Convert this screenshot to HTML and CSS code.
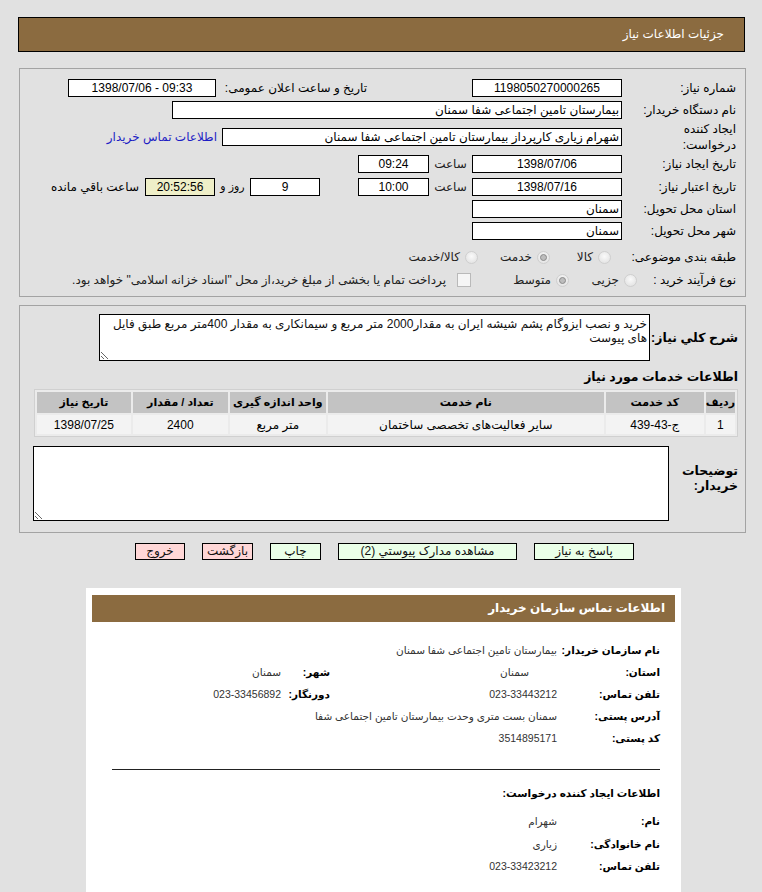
FILE: index.html
```html
<!DOCTYPE html>
<html lang="fa" dir="rtl">
<head>
    <meta charset="UTF-8">
    <title>جزئیات اطلاعات نیاز</title>
    <link rel="stylesheet" href="styles.css">
</head>
<body>
<div class="wrap">
    <div class="page-title">جزئیات اطلاعات نیاز</div>

    <!-- مشخصات نیاز -->
    <div class="panel info">
        <div class="row r1">
            <div class="lbl">شماره نیاز:</div>
            <div class="box w150 c">1198050270000265</div>
            <div class="pub">تاریخ و ساعت اعلان عمومی:</div>
            <div class="box w149 c ltr">1398/07/06 - 09:33</div>
        </div>
        <div class="row">
            <div class="lbl">نام دستگاه خریدار:</div>
            <div class="box w450">بیمارستان تامین اجتماعی شفا سمنان</div>
        </div>
        <div class="row r3">
            <div class="lbl">ایجاد کننده<br>درخواست:</div>
            <div class="box w400">شهرام زیاری کارپرداز بیمارستان تامین اجتماعی شفا سمنان</div>
            <a class="contact-link" href="#buyer">اطلاعات تماس خریدار</a>
        </div>
        <div class="row r4">
            <div class="lbl">تاریخ ایجاد نیاز:</div>
            <div class="box w150 c">1398/07/06</div>
            <div class="saat">ساعت</div>
            <div class="box w71 c">09:24</div>
        </div>
        <div class="row r5">
            <div class="lbl">تاریخ اعتبار نیاز:</div>
            <div class="box w150 c">1398/07/16</div>
            <div class="saat">ساعت</div>
            <div class="box w71 c">10:00</div>
            <div class="box w70 c days">9</div>
            <div class="ruz">روز و</div>
            <div class="box w70 c remain">20:52:56</div>
            <div class="remain-lbl">ساعت باقي مانده</div>
        </div>
        <div class="row">
            <div class="lbl">استان محل تحویل:</div>
            <div class="box w150">سمنان</div>
        </div>
        <div class="row">
            <div class="lbl">شهر محل تحویل:</div>
            <div class="box w150">سمنان</div>
        </div>
        <div class="row r8">
            <div class="lbl">طبقه بندی موضوعی:</div>
            <div class="opts cat">
                <span class="opt o1"><i class="radio"></i>کالا</span>
                <span class="opt o2"><i class="radio on"></i>خدمت</span>
                <span class="opt"><i class="radio"></i>کالا/خدمت</span>
            </div>
        </div>
        <div class="row r9">
            <div class="lbl">نوع فرآیند خرید :</div>
            <div class="opts proc">
                <span class="opt o3"><i class="radio"></i>جزیی</span>
                <span class="opt o4"><i class="radio on"></i>متوسط</span>
                <span class="opt"><i class="check"></i>پرداخت تمام یا بخشی از مبلغ خرید،از محل "اسناد خزانه اسلامی" خواهد بود.</span>
            </div>
        </div>
    </div>

    <!-- شرح و اقلام -->
    <div class="panel items">
        <div class="desc-row">
            <div class="blbl">شرح کلي نياز:</div>
            <textarea class="area desc" readonly>خرید و نصب ایزوگام پشم شیشه ایران به مقدار2000 متر مربع و سیمانکاری به مقدار 400متر مربع طبق فایل های پیوست</textarea>
        </div>

        <div class="sec-title">اطلاعات خدمات مورد نياز</div>
        <table class="grid">
            <tr>
                <th class="c-idx">ردیف</th>
                <th class="c-code">کد خدمت</th>
                <th class="c-name">نام خدمت</th>
                <th class="c-unit">واحد اندازه گیری</th>
                <th class="c-qty">تعداد / مقدار</th>
                <th>تاریخ نیاز</th>
            </tr>
            <tr>
                <td>1</td>
                <td>ج-43-439</td>
                <td>سایر فعالیت‌های تخصصی ساختمان</td>
                <td>متر مربع</td>
                <td>2400</td>
                <td>1398/07/25</td>
            </tr>
        </table>

        <div class="note-row">
            <div class="blbl">توضیحات<br>خریدار:</div>
            <textarea class="area note" readonly></textarea>
        </div>
    </div>

    <div class="actions">
        <span class="btn green b-reply">پاسخ به نیاز</span>
        <span class="btn green b-docs">مشاهده مدارک پیوستي (2)</span>
        <span class="btn green b-print">چاپ</span>
        <span class="btn red b-back">بازگشت</span>
        <span class="btn red b-exit">خروج</span>
    </div>

    <!-- اطلاعات تماس -->
    <div class="card" id="buyer">
        <div class="card-head">اطلاعات تماس سازمان خریدار</div>
        <div class="contact">
            <div class="k">نام سازمان خریدار:</div><div class="v span3">بیمارستان تامین اجتماعی شفا سمنان</div>
            <div class="k">استان:</div><div class="v pad">سمنان</div><div class="k">شهر:</div><div class="v">سمنان</div>
            <div class="k">تلفن تماس:</div><div class="v">023-33443212</div><div class="k">دورنگار:</div><div class="v">023-33456892</div>
            <div class="k">آدرس پستی:</div><div class="v span3">سمنان بست متری وحدت بیمارستان تامین اجتماعی شفا</div>
            <div class="k">کد پستی:</div><div class="v span3">3514895171</div>
        </div>
        <div class="sep"></div>
        <div class="sub-title">اطلاعات ایجاد کننده درخواست:</div>
        <div class="contact creator">
            <div class="k">نام:</div><div class="v span3">شهرام</div>
            <div class="k">نام خانوادگی:</div><div class="v span3">زیاری</div>
            <div class="k">تلفن تماس:</div><div class="v span3">023-33423212</div>
        </div>
    </div>
</div>
</body>
</html>
```

FILE: styles.css
```css
:root { --bg: #e1e1e1; --brown: #8b6b40; --line: #a3a3a3; --font: "Liberation Sans", "DejaVu Sans", sans-serif; }
body { margin: 0; background: var(--bg); color: #000; font-family: var(--font); font-size: 12px; direction: rtl; }

.wrap { padding: 17px 17px 0 18px; }

.page-title { height: 33px; line-height: 33px; background: var(--brown); border: 1px solid #000; color: #fff; padding-right: 20px; }

.panel { border: 1px solid var(--line); margin-right: -1px; margin-left: 1px; }
.info { margin-top: 16px; padding: 8px 9px 0 0; box-sizing: border-box; height: 229px; }
.items { margin-top: 8px; padding: 8px 7px 0 0; box-sizing: border-box; height: 228px; }

/* ردیف های فرم */
.row { display: flex; align-items: center; height: 22px; white-space: nowrap; }
.row.r3 { height: 32px; }
.row.r5 { height: 23px; }
.row.r8 { height: 30px; }
.row.r9 { height: 16px; }
.lbl { width: 110px; margin-left: 4px; line-height: 16px; }
.box { height: 16px; line-height: 16px; border: 1px solid #000; background: #fff; padding: 0 2px; overflow: hidden; white-space: nowrap; }
.box.c { text-align: center; }
.box.ltr { direction: ltr; }
.w150 { width: 144px; }
.w149 { width: 142px; }
.w450 { width: 444px; }
.w400 { width: 394px; }
.w71 { width: 65px; }
.w70 { width: 64px; }
.pub { width: 145px; margin-right: 105px; margin-left: 6px; }
.contact-link { color: #1d1dc4; text-decoration: none; margin-right: 5px; }
.saat { width: 43px; text-align: center; color: #222; }
.days { margin-right: 38px; }
.ruz { width: 35px; text-align: center; font-size: 11px; }
.remain { background: #efefc8; }
.remain-lbl { margin-right: 6px; }

/* گزینه های رادیویی */
.opts { display: flex; align-items: center; }
.opt { display: flex; align-items: center; gap: 5px; color: #222; }
.cat { margin-right: 11px; }
.proc { margin-right: -15px; }
.o1 { width: 61px; }
.o2 { width: 72px; }
.o3 { width: 68px; }
.o4 { width: 98px; }
.radio { width: 11px; height: 11px; border-radius: 50%; border: 1px solid #cfcfcf; background: radial-gradient(circle at 50% 40%, #fafafa, #dedede); position: relative; flex: none; }
.radio.on::after { content: ""; position: absolute; left: 2px; top: 2px; width: 5px; height: 5px; border-radius: 50%; border: 1px solid #8a8a8a; background: #bdbdbd; }
.check { width: 12px; height: 12px; border: 1px solid #b9b9b9; background: #f5f5f5; flex: none; margin-left: 6px; }

/* شرح نیاز */
.desc-row, .note-row { display: flex; align-items: center; }
.blbl { font-weight: bold; font-size: 12.5px; flex: none; }
.desc-row .blbl { width: 88px; }
.note-row .blbl { width: 69px; line-height: 15px; }
.area { font-family: var(--font); font-size: 12px; border: 1px solid #000; background: #fff; padding: 2px 2px; box-sizing: border-box; margin: 0; direction: rtl; color: #111; line-height: 14px; display: block; resize: both; }
.desc { width: 551px; height: 47px; }
.note { width: 636px; height: 75px; margin-top: 9px; }

.sec-title { font-weight: bold; font-size: 12.5px; margin: 8px 0 4px; height: 16px; line-height: 16px; }

.grid { width: 704px; border: 1px solid #d0d0d0; border-spacing: 2px; background: #ebebeb; text-align: center; }
.grid th { background: #c3c3c3; font-size: 11px; height: 21px; padding: 0; }
.grid td { background: #f3f3f3; height: 19px; padding: 0; }
.c-idx { width: 25px; }
.c-code { width: 98px; }
.c-name { width: 276px; }
.c-unit { width: 96px; }
.c-qty { width: 95px; }

/* دکمه ها */
.actions { display: flex; justify-content: center; gap: 17px; margin-top: 10px; padding-left: 6px; }
.btn { height: 15px; line-height: 15px; border: 1px solid #000; text-align: center; font-size: 12px; color: #111; }
.green { background: #eaffe8; }
.red { background: #ffd7d7; }
.b-reply { width: 98px; }
.b-docs { width: 177px; }
.b-print { width: 49px; }
.b-back { width: 49px; }
.b-exit { width: 48px; }

/* کارت تماس */
.card { width: 583px; margin: 28px 64px 0 0; background: #fff; padding: 7px 6px 20px; }
.card-head { height: 27px; line-height: 27px; background: var(--brown); color: #fff; font-weight: bold; padding-right: 10px; font-size: 12px; }
.contact { display: grid; grid-template-columns: 103px 227px 49px 1fr; grid-auto-rows: 22px; align-items: center; margin: 17px 15px 0 0; font-size: 10.5px; }
.k { font-weight: bold; color: #000; white-space: nowrap; }
.v { color: #333; white-space: nowrap; }
.v.span3 { grid-column: span 3; }
.v.pad { padding-right: 28px; }
.sep { height: 1px; background: #222; margin: 20px 15px 0 20px; }
.sub-title { font-weight: bold; font-size: 10.5px; margin: 15px 15px 0 0; height: 16px; line-height: 16px; }
.creator { margin-top: 9px; grid-auto-rows: 22.5px; }
```
